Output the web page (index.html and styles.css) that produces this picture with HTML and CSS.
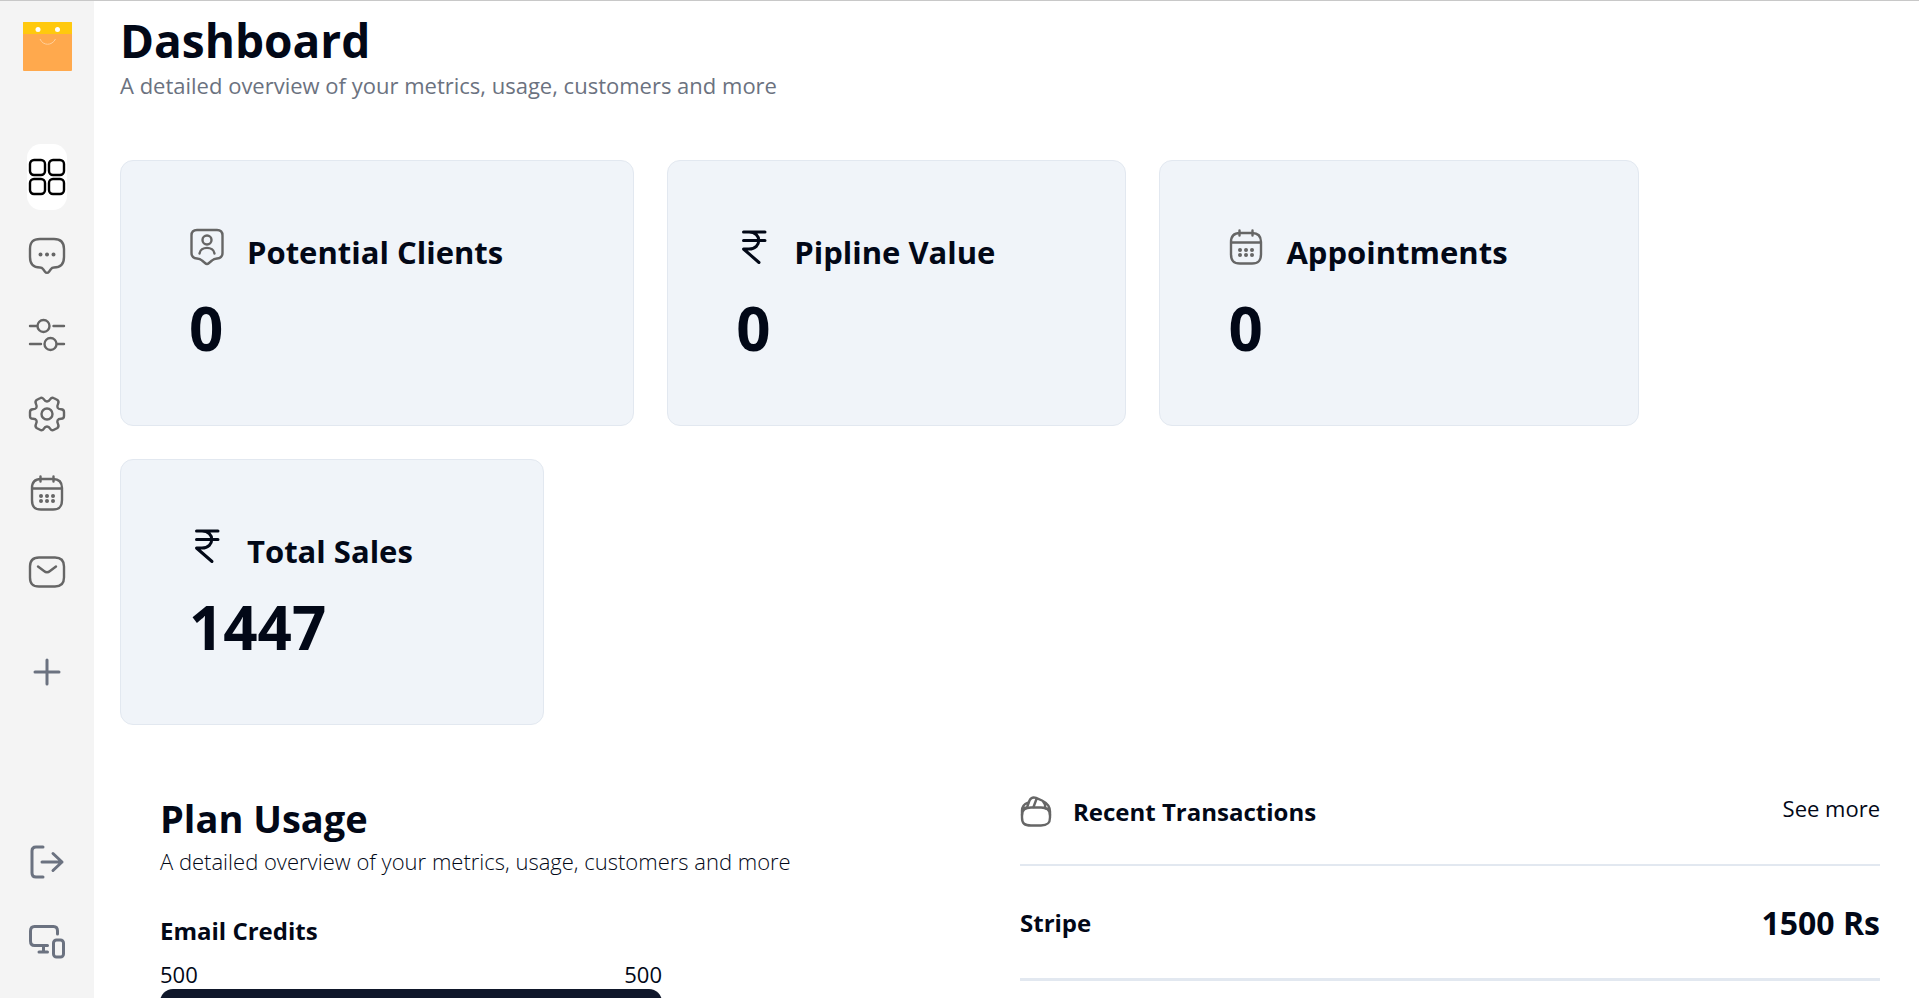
FILE: index.html
```html
<!DOCTYPE html>
<html lang="en">
<head>
<meta charset="utf-8">
<meta name="viewport" content="width=device-width, initial-scale=1">
<title>Dashboard</title>
<link rel="stylesheet" href="styles.css">
</head>
<body>
<svg class="sprite" aria-hidden="true">
  <symbol id="i-calendar" viewBox="0 0 36 36">
    <path d="M12 4H24C30.500 4 33 7 33 13V25C33 31.500 30.500 34.500 24 34.500H12C5.500 34.500 3 31.500 3 25V13C3 7 5.500 4 12 4ZM3 13.500H33"/>
    <path d="M11.500 1.500V6.500M24.500 1.500V6.500"/>
    <path class="dots" d="M12 21h.01M18 21h.01M24 21h.01M12 26h.01M18 26h.01M24 26h.01"/>
  </symbol>
  <symbol id="i-rupee" viewBox="0 0 36 36">
    <path d="M7.500 3H29M7.500 11.500H29M7.500 3H13C26 3 26 20 13 20H7.500L23 33.500"/>
  </symbol>
</svg>
<div class="shell">
  <aside class="sidebar">
    <a class="logo" href="#" aria-label="Home">
      <svg viewBox="0 0 49 49" width="49" height="49">
        <rect width="49" height="49" rx="1" fill="#ffa94d"/>
        <path d="M1 0H48Q49 0 49 1V12H0V1Q0 0 1 0Z" fill="#ffc90e"/>
        <circle cx="15" cy="7.500" r="2.500" fill="#fff"/><circle cx="34.500" cy="7.500" r="2.500" fill="#fff"/>
        <path d="M17 17C20 24 29 24 32.500 17" fill="none" stroke="#ffcf9a" stroke-width="1"/>
      </svg>
    </a>
    <nav class="nav" aria-label="Main">
      <a class="nav-item active" href="#" aria-label="Dashboard"><svg class="icon" viewBox="0 0 36 36"><rect x="1" y="1" width="15" height="15" rx="4"/><rect x="20" y="1" width="15" height="15" rx="4"/><rect x="1" y="20" width="15" height="15" rx="4"/><rect x="20" y="20" width="15" height="15" rx="4"/></svg></a>
      <a class="nav-item" href="#" aria-label="Conversations"><svg class="icon" viewBox="0 0 36 36"><path d="M11 1H25C32 1 35 4 35 11V19C35 26 32 29.500 25 29.500C23.500 29.500 22.700 30 22 31L20 33.700C18.800 35.300 17.200 35.300 16 33.700L14 31C13.300 30 12.500 29.500 11 29.500C4 29.500 1 26 1 19V11C1 4 4 1 11 1Z"/><path class="dots" d="M11.500 16.500h.01M18 16.500h.01M24.500 16.500h.01"/></svg></a>
      <a class="nav-item" href="#" aria-label="Integrations"><svg class="icon" viewBox="0 0 36 36"><circle cx="14.500" cy="9" r="6"/><circle cx="21.500" cy="27" r="6"/><path d="M1 9H8M24.500 9H35M1 27H12M28 27H35"/></svg></a>
      <a class="nav-item" href="#" aria-label="Settings"><svg class="icon" viewBox="0 0 36 36"><circle cx="18" cy="18" r="5.500"/><path d="M1 16C1 14 2 13.200 4 13.200C7.500 13.200 8.500 11 7 8C6 6 6.500 4.700 8 3.800L11 2.200C12.500 1.300 13.800 1.700 14.700 3.200C16.500 6.300 19.500 6.300 21.300 3.200C22.200 1.700 23.500 1.300 25 2.200L28 3.800C29.500 4.700 30 6 29 8C27.500 11 28.500 13.200 32 13.200C34 13.200 35 14 35 16V20C35 22 34 22.800 32 22.800C28.500 22.800 27.500 25 29 28C30 30 29.500 31.300 28 32.200L25 33.800C23.500 34.700 22.200 34.300 21.300 32.800C19.500 29.700 16.500 29.700 14.700 32.800C13.800 34.300 12.500 34.700 11 33.800L8 32.200C6.500 31.300 6 30 7 28C8.500 25 7.500 22.800 4 22.800C2 22.800 1 22 1 20Z"/></svg></a>
      <a class="nav-item" href="#" aria-label="Appointments"><svg class="icon"><use href="#i-calendar"/></svg></a>
      <a class="nav-item" href="#" aria-label="Email marketing"><svg class="icon" viewBox="0 0 36 36"><path d="M10 3.500H26C32.500 3.500 35 6.500 35 12.500V23.500C35 29.500 32.500 32.500 26 32.500H10C3.500 32.500 1 29.500 1 23.500V12.500C1 6.500 3.500 3.500 10 3.500Z"/><path d="M9 12.500L15 17C17 18.700 19 18.700 21 17L27 12.500"/></svg></a>
    </nav>
    <button class="side-btn add" type="button" aria-label="Add"><svg class="icon slate" viewBox="0 0 36 36"><path d="M18 6V30M6 18H30"/></svg></button>
    <div class="side-foot">
      <button class="side-btn" type="button" aria-label="Sign out"><svg class="icon slate" viewBox="0 0 36 36"><path d="M14 3H7C4.500 3 3 4.500 3 7V29C3 31.500 4.500 33 7 33H14M13 18H33M24 9.500L33 18L24 26.500"/></svg></button>
      <button class="side-btn" type="button" aria-label="Devices"><svg class="icon slate" viewBox="0 0 36 36"><path d="M28.500 10V7C28.500 4 27 2.500 24.500 2.500H5.500C3 2.500 1.500 4 1.500 7V17C1.500 20 3 21.500 5.500 21.500H18.500M14.500 21.500V28M10 28H18.500"/><rect x="24.500" y="16" width="10" height="17" rx="3"/></svg></button>
    </div>
  </aside>
  <main class="main">
    <header>
      <h1 class="title">Dashboard</h1>
      <p class="subtitle">A detailed overview of your metrics, usage, customers and more</p>
    </header>
    <section class="cards" aria-label="Metrics">
      <article class="card">
        <div class="card-head"><svg class="icon" viewBox="0 0 36 36"><path d="M8 1H28C31.500 1 33.500 3 33.500 6.500V24C33.500 27.500 31.500 29.300 28 29.500C25.500 29.600 24.500 30 23 31.500L20 34C18.700 35.200 17.300 35.200 16 34L13 31.500C11.500 30 10.500 29.600 8 29.500C4.500 29.300 2.500 27.500 2.500 24V6.500C2.500 3 4.500 1 8 1Z"/><circle cx="18" cy="11" r="4.500"/><path d="M10.500 24.500C11.500 17 24.500 17 25.500 24.500"/></svg><h2 class="card-title">Potential Clients</h2></div>
        <p class="value">0</p>
      </article>
      <article class="card">
        <div class="card-head"><svg class="icon ink"><use href="#i-rupee"/></svg><h2 class="card-title">Pipline Value</h2></div>
        <p class="value">0</p>
      </article>
      <article class="card">
        <div class="card-head"><svg class="icon"><use href="#i-calendar"/></svg><h2 class="card-title">Appointments</h2></div>
        <p class="value">0</p>
      </article>
      <article class="card">
        <div class="card-head"><svg class="icon ink"><use href="#i-rupee"/></svg><h2 class="card-title">Total Sales</h2></div>
        <p class="value">1447</p>
      </article>
    </section>
    <div class="panels">
      <section class="usage">
        <h2 class="panel-title">Plan Usage</h2>
        <p class="panel-sub">A detailed overview of your metrics, usage, customers and more</p>
        <h3 class="label" id="credits">Email Credits</h3>
        <div class="meter">
          <div class="meter-row"><span>500</span><span>500</span></div>
          <div class="bar" role="progressbar" aria-labelledby="credits" aria-valuemin="0" aria-valuemax="500" aria-valuenow="500"><div class="bar-fill" style="width:100%"></div></div>
        </div>
      </section>
      <section class="transactions">
        <div class="tx-head">
          <svg class="icon tx-icon" viewBox="0 0 32 32"><path d="M11 11.500H21C27.500 11.500 30 14 30 19V21.500C30 27.500 27.500 29.500 21 29.500H11C4.500 29.500 2 27.500 2 21.500V19C2 14 4.500 11.500 11 11.500Z"/><path d="M2 19V14.500C2 10 4 8 8 6.500M30 19V15.500C30 10.500 26 6.500 22 4.500L16 1.800C13 .8 11 1.500 9.500 4.500L7 11.500M16.500 3L13.500 11M23 5.500C25 7.500 25.500 9.500 25 12M3.500 12.500C5 11.500 6.500 11.500 7 11.500M28.500 13L25 12"/></svg>
          <h3 class="label">Recent Transactions</h3>
          <a class="more" href="#">See more</a>
        </div>
        <div class="tx-row"><span class="label">Stripe</span><span class="amount">1500 Rs</span></div>
      </section>
    </div>
  </main>
</div>
</body>
</html>
```
FILE: styles.css
```css
* { box-sizing: border-box; margin: 0; padding: 0; }
body { font-family: "Open Sans", "Noto Sans", sans-serif; font-size: 22px; line-height: 32px; color: #020817; background: #fff; }
a { color: inherit; text-decoration: none; }
button { border: 0; background: none; cursor: pointer; }
.sprite { display: none; }
.shell { display: flex; height: 100vh; border-top: 1px solid #c8c8c8; overflow: hidden; }

.icon { width: 36px; height: 36px; flex: none; display: block; fill: none; stroke: #666; stroke-width: 2.4; stroke-linecap: round; stroke-linejoin: round; overflow: visible; }
.dots { stroke-width: 4; }
.icon.ink { stroke: #020817; stroke-width: 3; }
.icon.slate { stroke: #6b7280; stroke-width: 3; }

.sidebar { width: 94px; flex: none; display: flex; flex-direction: column; align-items: center; padding: 21px 0 38px; background: #f4f4f4; }
.logo svg { display: block; }
.nav { display: flex; flex-direction: column; gap: 13px; margin-top: 73px; }
.nav-item { display: grid; place-items: center; width: 40px; height: 66px; border-radius: 14px; }
.nav-item.active { background: #fff; }
.nav-item.active .icon { stroke: #000; }
.side-btn { display: block; }
.add { margin-top: 49px; }
.side-foot { display: grid; gap: 44px; margin-top: auto; }

.main { flex: 1; min-width: 0; padding: 9px 39px 0 26px; overflow-y: auto; scrollbar-width: none; }
.title { font-size: 46px; line-height: 60px; font-weight: 700; }
.subtitle { line-height: 30px; color: #6b7280; }
.cards { display: flex; flex-wrap: wrap; gap: 33px; margin-top: 60px; }
.card { padding: 66px 130px 54px 68px; border: 1px solid #e2e8f0; border-radius: 13px; background: #f0f4f9; }
.card-head { display: flex; align-items: flex-start; gap: 22px; }
.card-head .icon { margin-top: 2px; }
.card-title { font-size: 31px; line-height: 50px; font-weight: 700; }
.value { margin-top: 8px; font-size: 60px; line-height: 86px; font-weight: 700; }

.panels { display: grid; grid-template-columns: 1fr 1fr; gap: 40px; margin-top: 65px; }
.usage { padding-left: 40px; padding-top: 3px; }
.panel-title { font-size: 38px; line-height: 50px; font-weight: 700; }
.panel-sub { margin-top: 2px; font-weight: 300; }
.label { font-size: 24px; line-height: 36px; font-weight: 700; }
.usage .label { margin-top: 36px; }
.meter { max-width: 502px; margin-top: 10px; }
.meter-row { display: flex; justify-content: space-between; line-height: 30px; }
.bar { height: 26px; border-radius: 13px; background: #f1f5f9; overflow: hidden; }
.bar-fill { height: 100%; background: #0f172a; }

.tx-head { display: flex; align-items: center; padding: 4px 0 34px; border-bottom: 2px solid #e2e8f0; }
.tx-icon { width: 32px; height: 32px; margin-right: 21px; }
.more { align-self: flex-start; margin-left: auto; line-height: 28px; }
.tx-row { display: flex; align-items: center; justify-content: space-between; padding: 37px 0 35px; border-bottom: 3px solid #e2e8f0; }
.amount { font-size: 32px; line-height: 40px; font-weight: 700; }
```
